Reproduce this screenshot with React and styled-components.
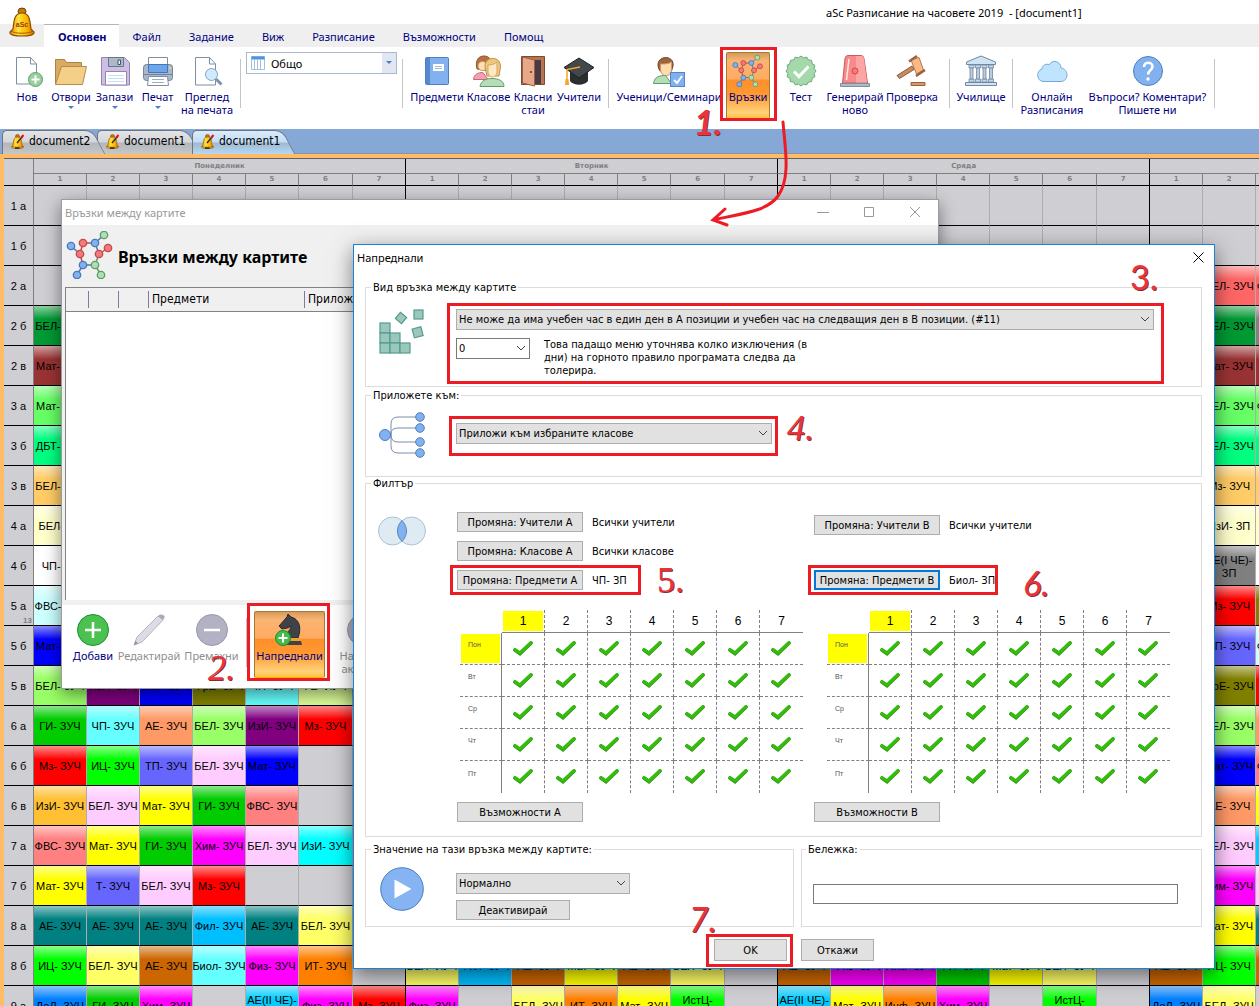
import React from "react";
import styled, { createGlobalStyle, css } from "styled-components";

const ui = `"Noto Sans", "Open Sans", sans-serif`;
const dialogFont = `Tahoma, "DejaVu Sans Condensed", Roboto, sans-serif`;
const arial = `"Liberation Sans", Arial, sans-serif`;
const navy = "#000080";
const red = "#ed1c24";

const GlobalStyle = createGlobalStyle`
  * { box-sizing: border-box; }
  body { margin: 0; overflow: hidden; background: #fff; font-family: ${ui}; font-size: 11px; line-height: 13px; color: #000; }
  button, select, input { font: inherit; color: inherit; margin: 0; padding: 0; border: 0; background: none; }
  svg { display: block; flex: none; }
  h1, h2, p { margin: 0; font-weight: normal; font-size: inherit; }
`;

const Desktop = styled.main`
  position: relative;
  height: 100vh;
  overflow: hidden;
  display: flex;
  flex-direction: column;
`;

/* ---------- title, menu, ribbon ---------- */

const TitleBar = styled.header`
  flex: none;
  height: 24px;
  padding: 6px 0 0 826px;
  white-space: pre;
`;

const AppLogo = styled.div`
  position: absolute;
  left: 7px;
  top: 7px;
`;

const MenuBar = styled.nav`
  flex: none;
  display: flex;
  height: 23px;
  padding-left: 44px;
  background: #efefef;
`;

const MenuTab = styled.button`
  height: 23px;
  padding: 2px 14px 0;
  color: ${navy};
  ${(p) =>
    p.$active &&
    css`
      background: #fff;
      border-top: 1px solid #b4b4b4;
      font-weight: bold;
      padding: 1px 12px 0 14px;
    `}
`;

const Ribbon = styled.section`
  flex: none;
  display: flex;
  align-items: flex-start;
  height: 82px;
  padding: 5px 0 0 5px;
`;

const RibbonButton = styled.button`
  position: relative;
  z-index: 0;
  flex: none;
  width: ${(p) => p.$w}px;
  height: 67px;
  padding-top: 3px;
  display: flex;
  flex-direction: column;
  align-items: center;
  gap: 3px;
  color: ${(p) => (p.$muted ? "#8f8f8f" : navy)};
  text-align: center;
  white-space: pre;
  ${(p) =>
    p.$hot &&
    css`
      &::before {
        content: "";
        position: absolute;
        z-index: -1;
        inset: 0 2px;
        border: 1px solid #a5792f;
        border-bottom-color: #ffb000;
        border-radius: 2px;
        background: linear-gradient(#d69a5c, #fbb472 12%, #ffab62 40%, #ff8f2a 42%, #ff9a33 65%, #ffd27a 92%, #ffc23c);
      }
    `}
`;

const Caret = styled.i`
  width: 0;
  border: 3px solid transparent;
  border-top-color: #4a7fc4;
  border-bottom: 0;
`;

const Divider = styled.span`
  flex: none;
  width: 1px;
  height: 49px;
  margin: 7px 5px 0;
  background: #c4c4c4;
`;

const ViewPicker = styled.div`
  position: relative;
  width: 151px;
  height: 22px;
  svg { position: absolute; left: 5px; top: 4px; }
  select {
    width: 100%;
    height: 22px;
    padding-left: 24px;
    appearance: none;
    border: 1px solid #a9b9d3;
    background: #fff;
  }
  i {
    position: absolute;
    right: 1px;
    top: 1px;
    width: 14px;
    height: 20px;
    background: #e2e6f2;
    pointer-events: none;
  }
  i::after {
    content: "";
    position: absolute;
    left: 4px;
    top: 8px;
    border: 3px solid transparent;
    border-top-color: #4a7fc4;
    border-bottom: 0;
  }
`;

/* ---------- document tabs ---------- */

const DocTabs = styled.nav`
  flex: none;
  display: flex;
  height: 24px;
  padding: 1px 0 0 2px;
  background: #86a8d6;
`;

const tabFace = (active) =>
  active
    ? "linear-gradient(#d9ebfb, #c3dcf5 48%, #9fb9cf 52%, #b5d8f5)"
    : "linear-gradient(#e2e3e6, #d4d6da 48%, #b3b6ba 52%, #c5c7ca)";

const DocTab = styled.button`
  position: relative;
  z-index: ${(p) => p.$z};
  width: 95px;
  height: 23px;
  padding: 0 0 0 8px;
  display: flex;
  align-items: center;
  gap: 4px;
  font: 12px/13px ${dialogFont};
  &::before,
  &::after {
    content: "";
    position: absolute;
    z-index: -1;
    top: 0;
    height: 23px;
    border: 1px solid #6f747c;
    background: ${(p) => tabFace(p.$active)};
  }
  &::before {
    left: 0;
    width: 82px;
    border-width: 1px 0 0 1px;
    border-radius: 5px 0 0 0;
  }
  &::after {
    left: 70px;
    width: 26px;
    border-width: 1px 1px 0 0;
    border-radius: 0 8px 0 0;
    transform: skewX(28deg);
  }
`;

/* ---------- timetable ---------- */

const Board = styled.section`
  flex: 1;
  min-height: 0;
  overflow: hidden;
  padding: 4px 0 0 4px;
  background: #ffbb66;
  border-top: 1px solid #8793b0;
`;

const Timetable = styled.table`
  table-layout: fixed;
  width: 1518px;
  border-collapse: separate;
  border-spacing: 0;
  border-top: 1px solid #5f6065;
  background: #cfced3;
  font-family: ${arial};
`;

const DayHead = styled.th`
  height: 15px;
  padding: 0;
  border-right: 1px solid #000;
  border-bottom: 1px solid #808080;
  color: #808080;
  font: bold 7px/13px "DejaVu Sans", sans-serif;
`;

const PeriodHead = styled.th`
  height: 12px;
  padding: 0;
  border-right: 1px solid ${(p) => (p.$last ? "#000" : "#808080")};
  border-bottom: 1px solid #000;
  color: #808080;
  font: bold 7px/11px "DejaVu Sans", sans-serif;
`;

const CornerHead = styled.th`
  padding: 0;
  border-right: 1px solid #808080;
  border-bottom: 1px solid #000;
`;

const ClassHead = styled.th`
  position: relative;
  height: 40px;
  padding: 2px 0 0;
  border-right: 1px solid #808080;
  border-bottom: 1px solid #000;
  font-size: 11px;
  font-weight: normal;
  small {
    position: absolute;
    right: 1px;
    bottom: 0;
    color: #808080;
    font: bold 8px/8px ${arial};
  }
`;

const Lesson = styled.td`
  height: 40px;
  padding: 2px 0 0;
  border-right: 1px solid ${(p) => (p.$last ? "#000" : "#adadb0")};
  border-bottom: 1px solid #000;
  background: ${(p) =>
    p.$fill
      ? `linear-gradient(rgba(255,255,255,.55), rgba(255,255,255,0) 34%), ${p.$fill}`
      : "transparent"};
  text-align: center;
  vertical-align: middle;
  font-size: 11px;
  line-height: 13px;
  div {
    display: flex;
    justify-content: center;
    overflow: hidden;
    white-space: pre;
  }
`;

/* ---------- windows ---------- */

const Window = styled.section`
  position: absolute;
  display: flex;
  flex-direction: column;
`;

const LinksWindow = styled(Window)`
  left: 61px;
  top: 199px;
  width: 878px;
  height: 490px;
  border: 1px solid #9c9c9c;
  background: #f0f0f0;
  box-shadow: 0 5px 16px rgba(0, 0, 0, 0.45);
`;

const LinksTitle = styled.header`
  display: flex;
  justify-content: space-between;
  align-items: center;
  height: 25px;
  padding: 0 17px 1px 3px;
  background: #fff;
  color: #999;
  div { display: flex; gap: 34px; }
`;

const LinksHeading = styled.div`
  display: flex;
  align-items: center;
  gap: 4px;
  height: 62px;
  padding: 0 0 3px 4px;
  h1 { font-size: 16px; line-height: 22px; font-weight: bold; padding-top: 5px; }
`;

const LinksList = styled.div`
  flex: 1;
  margin: 0 3px 5px;
  border: 1px solid #828282;
  border-right-color: #ccc;
  border-bottom: 0;
  background: #fff;
`;

const LinksTable = styled.table`
  width: 100%;
  table-layout: fixed;
  border-spacing: 0;
  background: #f0f0f0;
  border-bottom: 1px solid #828282;
  th {
    height: 23px;
    padding: 0 0 0 3px;
    font: 12px/13px ${dialogFont};
    text-align: left;
    background: linear-gradient(#7b7ba8, #7b7ba8) right 3px / 1px 17px no-repeat;
  }
`;

const LinksToolbar = styled.footer`
  display: flex;
  align-items: flex-start;
  height: 83px;
  padding: 6px 0 0 8px;
  background: #fff;
`;

const Advanced = styled(Window)`
  left: 353px;
  top: 244px;
  width: 862px;
  border: 1px solid #1883d7;
  background: #fff;
  box-shadow: 0 6px 20px rgba(0, 0, 0, 0.5);
  font-family: ${dialogFont};
`;

const AdvancedTitle = styled.header`
  display: flex;
  justify-content: space-between;
  align-items: center;
  height: 24px;
  padding: 0 10px 0 3px;
  font-family: ${ui};
`;

const WindowButton = styled.button`
  display: grid;
  place-items: center;
`;

const Form = styled.form`
  padding: 12px 12px 7px 11px;
`;

const Group = styled.fieldset`
  margin: 0 0 ${(p) => p.$after || 0}px;
  min-width: 0;
  padding: ${(p) => p.$pad};
  border: 1px solid #dcdcdc;
  legend {
    height: 13px;
    margin-left: -7px;
    padding: 0 2px;
  }
`;

const GroupRow = styled.div`
  display: flex;
  align-items: flex-start;
  gap: 30px;
`;

const IconSlot = styled.div`
  flex: none;
  width: 48px;
  display: flex;
  justify-content: center;
  padding-top: ${(p) => p.$top || 0}px;
`;

const Stack = styled.div`
  flex: ${(p) => p.$flex || "none"};
  display: flex;
  flex-direction: column;
  align-items: flex-start;
  gap: ${(p) => p.$gap || 0}px;
  padding-top: ${(p) => p.$top || 0}px;
`;

const SelectBox = styled.div`
  position: relative;
  width: ${(p) => p.$w};
  select {
    width: 100%;
    height: 21px;
    padding-left: 2px;
    appearance: none;
    border: 1px solid ${(p) => (p.$plain ? "#7a7a7a" : "#adadad")};
    border-radius: 0;
    background: ${(p) => (p.$plain ? "#fff" : "#e1e1e1")};
  }
  svg {
    position: absolute;
    right: 4px;
    top: 7px;
    pointer-events: none;
  }
`;

const PushButton = styled.button`
  flex: none;
  width: ${(p) => p.$w}px;
  height: ${(p) => p.$h || 20}px;
  border: ${(p) => (p.$focused ? "2px solid #0078d7" : "1px solid #adadad")};
  background: #e1e1e1;
  white-space: nowrap;
`;

const Marked = styled.div`
  position: relative;
  width: ${(p) => p.$w || "auto"};
  &::after {
    content: "";
    position: absolute;
    inset: ${(p) => p.$out};
    border: 3px solid ${red};
    pointer-events: none;
  }
`;

const ExceptionRow = styled.div`
  display: flex;
  gap: 14px;
  p { width: 275px; }
`;

const FilterSides = styled.div`
  display: flex;
  gap: 10px;
  padding-left: 1px;
`;

const Side = styled.div`
  width: ${(p) => p.$w}px;
`;

const Pickers = styled.div`
  display: flex;
  flex-direction: column;
  justify-content: space-between;
  height: 78px;
  margin-bottom: 20px;
  padding-top: ${(p) => p.$top || 0}px;
`;

const Picker = styled.div`
  display: flex;
  align-items: center;
  gap: 9px;
  white-space: nowrap;
`;

const SlotTable = styled.table`
  table-layout: fixed;
  width: 343px;
  margin: 0 0 9px ${(p) => p.$indent}px;
  border-spacing: 0;
  font-family: ${arial};
`;

const SlotHead = styled.th`
  height: 23px;
  padding: 1px 1px 1px;
  border-bottom: 1px solid #808080;
  border-right: ${(p) => (p.$edge ? "0" : "1px dashed #808080")};
  font-size: 12px;
  font-weight: normal;
  span {
    display: block;
    height: 20px;
    line-height: 21px;
    background: ${(p) => (p.$on ? "#ff0" : "none")};
  }
`;

const SlotDay = styled.th`
  height: 32px;
  padding: 1px;
  border-right: 1px solid #808080;
  border-bottom: ${(p) => (p.$edge ? "0" : "1px dashed #808080")};
  color: #555;
  font-size: 7px;
  font-weight: normal;
  text-align: left;
  span {
    display: block;
    height: 29px;
    padding-left: 7px;
    line-height: 22px;
    background: ${(p) => (p.$on ? "#ff0" : "none")};
  }
`;

const Slot = styled.td`
  height: 32px;
  padding: 0 1px 2px 0;
  border-bottom: ${(p) => (p.$bottom ? "0" : "1px dashed #808080")};
  border-right: ${(p) => (p.$edge ? "0" : "1px dashed #808080")};
  svg { margin: 0 auto; }
`;

const BottomGrid = styled.div`
  display: grid;
  grid-template-columns: 429px 1fr;
  column-gap: 7px;
  margin-top: 6px;
`;

const NoteInput = styled.input`
  width: 100%;
  height: 20px;
  border: 1px solid #7a7a7a;
  background: #fff;
`;

const FootCell = styled.div`
  display: flex;
  justify-content: ${(p) => p.$side};
  padding: 12px 7px 0 0;
`;

/* ---------- marker notes over the windows ---------- */

const Step = styled.strong`
  position: absolute;
  left: ${(p) => p.$x}px;
  top: ${(p) => p.$y}px;
  color: #e8353b;
  font: ${(p) => (p.$italic ? "italic" : "normal")} ${(p) => (p.$bold ? "bold" : "normal")}
    ${(p) => (p.$sans ? `34px/36px Lato, sans-serif` : `36px/36px "Liberation Serif", serif`)};
  text-shadow: 1px 1px 0 #8e2a2e;
  pointer-events: none;
`;

const Arrow = styled.svg`
  position: absolute;
  left: 700px;
  top: 118px;
  pointer-events: none;
`;

/* ---------- drawings ---------- */

const Bell = ({ size, logo }) => (
  <svg width={size} height={size} viewBox="0 0 28 30">
    <defs>
      <linearGradient id="bellFill" x1="0" x2="1">
        <stop offset="0" stopColor="#e58a00" />
        <stop offset=".35" stopColor="#ffe23a" />
        <stop offset=".7" stopColor="#ffb400" />
        <stop offset="1" stopColor="#c96a00" />
      </linearGradient>
    </defs>
    <ellipse cx="14" cy="4.500" rx="4" ry="3.500" fill="#c57a10" stroke="#6b3d08" />
    <path d="M5 22C6 17 5 6 14 6s8 11 9 16l3 3c1 3-5 4-12 4S1 28 2 25z" fill="url(#bellFill)" stroke="#8a4a00" strokeWidth="1.200" />
    <path d="M3 24c4 3 18 3 22 0" fill="none" stroke="#a85c00" />
    {logo ? (
      <text x="14" y="20" textAnchor="middle" fontSize="7" fontWeight="bold" fill="#9a3a00" fontFamily="Liberation Sans">aSc</text>
    ) : (
      <>
        <path d="M13 18 24 5" stroke="#333" strokeWidth="3" />
        <path d="M21 8 26 2" stroke="#e11" strokeWidth="4" />
        <path d="M9 28h9" stroke="#222" strokeWidth="3" />
      </>
    )}
  </svg>
);

const Ic = ({ children, s = 32, v = 32 }) => (
  <svg width={s} height={s} viewBox={`0 0 ${v} ${v}`} fill="none" strokeWidth="1">
    {children}
  </svg>
);

const NewIcon = () => (
  <Ic>
    <path d="M5.500 2.500h14l6 6.500v20h-20zM19.500 2.500v6.500h6" fill="#fff" stroke="#7d8fa3" />
    <circle cx="24.500" cy="24.500" r="7" fill="#97d09c" stroke="#5f9f68" />
    <path d="M24.500 20.500v8M20.500 24.500h8" stroke="#fff" strokeWidth="2" />
  </Ic>
);
const OpenIcon = () => (
  <Ic>
    <path d="M.5 29.500v-25h9l2 3h15v4" fill="#d9ab62" stroke="#a98445" />
    <path d="M.5 29.500 6.500 11.500h25l-4 18z" fill="#f3cf88" stroke="#b38d4e" />
  </Ic>
);
const SaveIcon = () => (
  <Ic>
    <path d="M2.500 2.500h23l5 5v22.500h-28z" fill="#cdbfe3" stroke="#9484b3" />
    <path d="M9.500 2.500h15v9h-15z" fill="#aeb8c6" stroke="#65758a" />
    <path d="M19 5h2.500v4.500H19z" fill="#eef" stroke="#42526b" />
    <path d="M6.500 16.500h21v13.500h-21z" fill="#fff" stroke="#9484b3" />
    <path d="M9 20.500h16M9 23.500h16M9 26.500h16" stroke="#bfe2f7" />
  </Ic>
);
const PrintIcon = () => (
  <Ic>
    <path d="M6.500 2.500h19v8h-19z" fill="#fff" stroke="#7d8fa3" />
    <rect x="1.500" y="9.500" width="29" height="16" rx="3" fill="#aab7ca" stroke="#72839b" />
    <path d="M6.500 9.500h19v8h-19z" fill="#6fa5ea" stroke="#4377bb" />
    <path d="M2 19.500h28" stroke="#72839b" />
    <path d="M6.500 21.500h19l1 9h-21z" fill="#fff" stroke="#7d8fa3" />
    <path d="M10 24.500h12M10 27.500h12" stroke="#9fb0c2" />
    <circle cx="28" cy="13" r="1" fill="#ffdf7a" />
  </Ic>
);
const PreviewIcon = () => (
  <Ic>
    <path d="M4.500 2.500h14l6 6.500v21h-20zM18.500 2.500v6.500h6" fill="#fff" stroke="#7d8fa3" />
    <circle cx="20.500" cy="19.500" r="6" fill="#cfeafd" stroke="#7fa3c6" />
    <path d="m25 24 5.500 5.500" stroke="#7d93aa" strokeWidth="3" />
  </Ic>
);
const BookIcon = () => (
  <Ic>
    <rect x="4.500" y="2.500" width="23" height="27" rx="1" fill="#83b0ee" stroke="#4d7fc0" />
    <path d="M5 3h4v26H5z" fill="#5489d0" />
    <path d="M12 9h11v7H12z" fill="#fff" />
    <path d="M14 11.500h7M14 13.500h7" stroke="#9dbde8" />
  </Ic>
);
const ClassesIcon = () => (
  <Ic>
    <path d="M4 14C2 6 5 1 11 1s9 5 6 15z" fill="#b86f45" stroke="#8d5230" />
    <circle cx="9.500" cy="11" r="4.500" fill="#ffe0b5" stroke="#c99762" />
    <path d="M.5 24.500c.5-5 4-7 9.500-7l5 7z" fill="#f5a0b0" stroke="#c8687c" />
    <path d="M12 12c-1-11 16-12 15.500 0L26 21H14z" fill="#efc77a" stroke="#c0924a" />
    <path d="M15 10c4 0 7-1 9-3v9c0 8-9 8-9 0z" fill="#ffe9c4" stroke="#d1a56a" />
    <path d="M7 31.500c1-6 6-8 12-8s12 2 12 8z" fill="#b3deb8" stroke="#639a6c" />
  </Ic>
);
const DoorIcon = () => (
  <Ic>
    <path d="M4.500 1.500h23v28h-23z" fill="#b87450" stroke="#7d4a30" />
    <path d="M8 5h16v24H8z" fill="#4a3a42" />
    <path d="m5.500 2 12 3v26l-12-3z" fill="#e6a888" stroke="#9a5f42" />
    <circle cx="14" cy="17" r="1" fill="#5a3321" />
  </Ic>
);
const CapIcon = () => (
  <Ic>
    <path d="M7 16v10c4 5 14 5 18 0V16z" fill="#2b2e31" />
    <path d="M16 3 31 12.500 16 23 1 12.500z" fill="#43484c" stroke="#1e2022" />
    <path d="M17 12 4 14.500v10" stroke="#f5a72c" strokeWidth="1.500" />
    <path d="M2.500 24h3l.5 6h-4z" fill="#f5a72c" />
  </Ic>
);
const StudentsIcon = () => (
  <Ic>
    <path d="M5.500 13C1.500 0 22-1 20 11l-1.500 5H7z" fill="#9b6540" stroke="#704529" />
    <path d="M7.500 9c4 0 8 0 11-2v7c0 9-11 9-11 0z" fill="#ffdcae" stroke="#c9985e" />
    <path d="M.5 28.500c1-7 6-8 12-8l6 8z" fill="#b3deb8" stroke="#639a6c" />
    <rect x="17.500" y="17.500" width="14" height="14" fill="#7fb0f0" stroke="#5685c6" />
    <path d="m21 25 3 3 5-7" stroke="#fff" strokeWidth="2" />
  </Ic>
);
const atoms = [
  [5, 15, "b"], [17, 12, "r"], [29, 12, "b"], [38, 4, "g"], [14, 23, "r"], [33, 23, "r"],
  [42, 17, "r"], [17, 34, "b"], [29, 34, "g"], [11, 44, "b"], [35, 44, "g"],
];
const bonds = [[0, 4], [1, 2], [2, 3], [1, 4], [2, 5], [5, 6], [4, 7], [7, 8], [8, 5], [7, 9], [8, 10]];
const atomFill = { b: "#82b1f0", r: "#f4797b", g: "#b0dfb6" };
const atomEdge = { b: "#4a78b8", r: "#c2484c", g: "#5d9b69" };
const Molecule = ({ s }) => (
  <Ic s={s} v={48}>
    {bonds.map(([a, b], i) => (
      <line key={i} x1={atoms[a][0]} y1={atoms[a][1]} x2={atoms[b][0]} y2={atoms[b][1]} stroke={atomEdge[atoms[a][2]]} strokeWidth="1.500" />
    ))}
    {atoms.map(([x, y, c], i) => (
      <circle key={i} cx={x} cy={y} r="3.700" fill={atomFill[c]} stroke={atomEdge[c]} strokeWidth="1.300" />
    ))}
  </Ic>
);
const sealPoints = Array.from({ length: 32 }, (_, i) => {
  const r = i % 2 ? 13.4 : 15;
  const a = (i * Math.PI) / 16;
  return `${(16 + r * Math.cos(a)).toFixed(1)},${(16 + r * Math.sin(a)).toFixed(1)}`;
}).join(" ");
const SealIcon = () => (
  <Ic>
    <polygon points={sealPoints} fill="#a5d9ac" stroke="#6aa873" />
    <path d="m9 16.500 5 5 9.500-10" stroke="#fff" strokeWidth="3" />
  </Ic>
);
const AlarmIcon = () => (
  <Ic>
    <path d="M6 3.500Q6.500.5 9 .5h13q2.500 0 3 3L28.500 28h-25z" fill="#f98a8a" stroke="#cc5a5c" />
    <path d="M17 1h5q2.500 0 3 3L28 27.500H17z" fill="#fba5a4" />
    <path d="M10 4 7.500 25" stroke="#fff" strokeWidth="1.500" opacity=".8" />
    <circle cx="16" cy="16" r="3" stroke="#cc4a4c" fill="#f77" />
    <path d="M1.500 28.500h29v3h-29z" fill="#a9bac8" stroke="#7c90a2" />
  </Ic>
);
const GavelIcon = () => (
  <Ic>
    <path d="M1 20.500 16 11l2 3.500L3.500 23.500z" fill="#c98a5f" stroke="#8f5b39" />
    <path d="m15 5 8-2.500L27.500 15l-7 4z" fill="#fbb985" stroke="#b0754b" />
    <path d="m13 6.500 8-5.500M20 21l9-6" stroke="#9c6239" strokeWidth="2.500" />
    <path d="M15 27.500h14v3H15z" fill="#d9996e" stroke="#9c6239" />
  </Ic>
);
const SchoolIcon = () => (
  <Ic>
    <path d="M1.500 9.500V7L16 1l14.500 6v2.500z" fill="#cfe4f3" stroke="#7188a0" />
    {[4, 10.5, 17, 23.5].map((x) => (
      <g key={x}>
        <path d={`M${x} 10h5v3h-5zM${x} 24h5v3h-5z`} fill="#c6d9ea" stroke="#7188a0" strokeWidth=".8" />
        <path d={`M${x + 1} 13h3v11h-3z`} fill="#b7cbe3" stroke="#7188a0" strokeWidth=".8" />
      </g>
    ))}
    <path d="M.5 27.500h31v3H.5z" fill="#cfe4f3" stroke="#7188a0" />
  </Ic>
);
const CloudIcon = () => (
  <Ic>
    <path d="M7 26.500a6.500 6.500 0 0 1-1-12.500c0-4 5-6 7-4 3-6 12-4 12 3 8 1 8 13 0 13.500z" fill="#bfe5fe" stroke="#77a9d8" />
  </Ic>
);
const HelpIcon = () => (
  <Ic>
    <circle cx="16" cy="16" r="14.500" fill="#82b1f0" stroke="#4d7fc0" />
    <path d="M12 12c0-6 8.500-5.500 8.500-.5 0 3.500-4 3.500-4.500 8" stroke="#fff" strokeWidth="2.500" />
    <circle cx="16" cy="24" r="1.700" fill="#fff" />
  </Ic>
);
const SheetIcon = () => (
  <svg width="14" height="14" viewBox="0 0 14 14" fill="#fff" stroke="#a3c0df">
    <path d="M.5.5h13v13H.5z" />
    <path d="M.5 2h13" stroke="#4f93dc" strokeWidth="3" />
    <path d="M3.500 3v10M6.500 3v10M9.500 3v10" />
  </svg>
);
const DiscIcon = ({ minus, ok }) => (
  <Ic>
    <circle cx="16" cy="16" r="15.500" fill={ok ? "#4bc24f" : "#b2b2c4"} stroke={ok ? "#1e8f32" : "#9797ae"} />
    <path d={minus ? "M8 16h16" : "M8 16h16M16 8v16"} stroke="#fff" strokeWidth="2.500" />
  </Ic>
);
const PenIcon = () => (
  <Ic>
    <path d="m1 31 3-8L25 2l5 4L9 28z" fill="#dcdce4" stroke="#b5b5c2" />
    <path d="m25 2 2-1.500q3-.5 4.500 1.500v2L30 6z" fill="#a9a9b8" />
    <path d="m1 31 1.500-4L5 29.500z" fill="#8f8f9f" />
  </Ic>
);
const KnightIcon = () => (
  <Ic>
    <path d="M5 12 13 3l1-3 3 3c8 2 11 10 7 21H12c-1-6 5-7 5-12-3 3-6 2-9 3z" fill="#3f4347" stroke="#26292c" />
    <path d="M16 24h10v3H16z" fill="#f3a12c" />
    <path d="M14 27h13l1 4H13z" fill="#3f4347" />
    <circle cx="9" cy="24" r="7.500" fill="#45bb4c" stroke="#1e8f32" />
    <path d="M9 19.500v9M4.500 24h9" stroke="#fff" strokeWidth="2" />
  </Ic>
);
const BlocksIcon = () => (
  <svg width="46" height="46" viewBox="0 0 46 46" fill="#9ac8bd" stroke="#559b8e" strokeWidth="1.200">
    {[[1, 14], [1, 24], [11, 24], [1, 34], [11, 34], [21, 34]].map(([x, y]) => (
      <rect key={`${x}-${y}`} x={x} y={y} width="10" height="10" />
    ))}
    <rect x="35" y="1" width="9" height="9" />
    <rect x="18" y="5" width="8" height="8" transform="rotate(40 22 9)" />
    <rect x="34" y="19" width="9" height="9" transform="rotate(-15 38 23)" />
  </svg>
);
const TreeIcon = () => (
  <svg width="48" height="48" viewBox="0 0 48 48" fill="none" stroke="#7d8fa3">
    <path d="M8 24h5M42 6H20q-7 0-7 7v22q0 7 7 7h22M13 24v-1q0-6 7-6h22M13 24q0 7 7 7h22" />
    <circle cx="7" cy="24" r="5.500" fill="#82b1f0" stroke="#4d7fc0" />
    {[6, 17, 31, 42].map((y) => (
      <circle key={y} cx="42" cy={y} r="4.300" fill="#82b1f0" stroke="#4d7fc0" />
    ))}
  </svg>
);
const VennIcon = () => (
  <svg width="48" height="32" viewBox="0 0 48 32" stroke="#a9c1d6">
    <circle cx="14.500" cy="16" r="14" fill="#dfebf2" />
    <circle cx="33.500" cy="16" r="14" fill="#dfebf2" />
    <path d="M24 5.700a14 14 0 0 1 0 20.600a14 14 0 0 1 0-20.600z" fill="#82b1f0" stroke="#5d89bd" />
  </svg>
);
const PlayIcon = () => (
  <svg width="44" height="44" viewBox="0 0 44 44">
    <circle cx="22" cy="22" r="21.300" fill="#86b3f1" stroke="#4d7fc0" />
    <path d="M14.500 12.500 31.500 22l-17 9.500z" fill="#fff" />
  </svg>
);
const Tick = () => (
  <svg width="22" height="16" viewBox="0 0 22 16" fill="none" strokeLinecap="round">
    <path d="M3 10 8 13.500 19 3" stroke="#2a8f12" strokeWidth="3.800" />
    <path d="M3 9.700 8 13 19 2.700" stroke="#35bd0c" strokeWidth="3.100" />
  </svg>
);
const Chevron = () => (
  <svg width="10" height="7" viewBox="0 0 10 7" fill="none" stroke="#444">
    <path d="m1 1 4 4 4-4" />
  </svg>
);

/* ---------- data ---------- */

const C = {
  green: "#009933", wine: "#993333", lime: "#66ff66", mint: "#00ff80", sand: "#ffcc66", cream: "#ffffcc",
  white: "#ffffff", ice: "#ccffff", blue: "#0000ff", apple: "#99ff66", purple: "#800080", olive: "#808000",
  aqua: "#66ffff", pear: "#ddff99", leaf: "#00cc00", peach: "#ff9966", red: "#ff0000", neon: "#00ff00",
  iris: "#6666ff", pink: "#ffccff", amber: "#ffc033", yellow: "#ffff00", rose: "#ff8080", magenta: "#ff00ff",
  cyan: "#00ffff", teal: "#008080", sky: "#00bfff", lemon: "#ffff66", brown: "#cc6600", orange: "#ff8000",
  azure: "#0080ff", water: "#00ccff", coral: "#ff6666", gray: "#808080",
};

const rows = [
  ["1 а", "", "", "", ""],
  ["1 б", "", "", "", ""],
  ["2 а", "", "", "", "|coral БЕЛ- ЗУЧ|coral ФВС- ЗУЧ"],
  ["2 б", "green БЕЛ- ЗУЧ", "", "", "|green БЕЛ- ЗУЧ|gray "],
  ["2 в", "wine Мат- ЗУЧ", "", "", "|wine Мат- ЗУЧ|wine "],
  ["3 а", "lime Мат- ЗУЧ", "", "", "|lime БЕЛ- ЗУЧ|lime ФВС- ЗУЧ"],
  ["3 б", "mint ДБТ- ЗУЧ", "", "", "|mint БЕЛ- ЗУЧ|mint "],
  ["3 в", "sand БЕЛ- ЗУЧ", "", "", "|sand Мз- ЗУЧ|sand "],
  ["4 а", "cream БЕЛ- ЗП", "", "", "|cream ИзИ- ЗП|cream "],
  ["4 б", "white ЧП- ЗП", "", "", "|gray АЕ(I ЧЕ)-\nЗП|white "],
  ["5 а", "ice ФВС- ЗУЧ", "", "", "|red Мз- ЗУЧ|olive "],
  ["5 б", "blue Мат- ЗУЧ", "", "", "|iris ТП- ЗУЧ|ice ФВС- ЗУЧ"],
  ["5 в", "apple БЕЛ- ЗУЧ|purple ИзИ- ЗУЧ|blue Мат- ЗУЧ|olive ФрЕ- ЗУЧ|aqua ЧП- ЗУЧ|pear ГЕ- ИУЧ", "", "", "|olive ФрЕ- ЗУЧ|red "],
  ["6 а", "leaf ГИ- ЗУЧ|aqua ЧП- ЗУЧ|peach АЕ- ЗУЧ|apple БЕЛ- ЗУЧ|purple ИзИ- ЗУЧ|red Мз- ЗУЧ", "", "", "|apple БЕЛ- ЗУЧ|peach "],
  ["6 б", "red Мз- ЗУЧ|neon ИЦ- ЗУЧ|iris ТП- ЗУЧ|pink БЕЛ- ЗУЧ|blue Мат- ЗУЧ", "", "", "|blue Мат- ЗУЧ|rose ФВС- ЗУЧ"],
  ["6 в", "amber ИзИ- ЗУЧ|pink БЕЛ- ЗУЧ|yellow Мат- ЗУЧ|leaf ГИ- ЗУЧ|rose ФВС- ЗУЧ", "", "", "|peach АЕ- ЗУЧ|yellow "],
  ["7 а", "rose ФВС- ЗУЧ|yellow Мат- ЗУЧ|leaf ГИ- ЗУЧ|magenta Хим- ЗУЧ|pink БЕЛ- ЗУЧ|cyan ИзИ- ЗУЧ", "", "", "|pink БЕЛ- ЗУЧ|water "],
  ["7 б", "yellow Мат- ЗУЧ|iris Т- ЗУЧ|pink БЕЛ- ЗУЧ|red Мз- ЗУЧ", "", "", "|magenta Хим- ЗУЧ|pink "],
  ["8 а", "teal АЕ- ЗУЧ|teal АЕ- ЗУЧ|teal АЕ- ЗУЧ|sky Фил- ЗУЧ|teal АЕ- ЗУЧ|lemon БЕЛ- ЗУЧ", "", "", "|yellow Мат- ЗУЧ|teal "],
  ["8 б", "neon ИЦ- ЗУЧ|lemon БЕЛ- ЗУЧ|brown АЕ- ЗУЧ|aqua Биол- ЗУЧ|magenta Физ- ЗУЧ|orange ИТ- ЗУЧ",
    "lemon БЕЛ- ИУЧ|sky Фил- ЗУЧ|brown АЕ- ЗУЧ|yellow Мат- ЗУЧ|brown АЕ- ЗУЧ|lemon БЕЛ- ЗУЧ",
    "brown АЕ- ЗУЧ|magenta Физ- ЗУЧ|magenta Хим- ЗУЧ|leaf ГИ- ЗУЧ|yellow Мат- ЗУЧ|lemon БЕЛ- ЗУЧ",
    "brown АЕ- ЗУЧ|neon ИЦ- ЗУЧ|brown "],
  ["9 а", "azure ДеЛ- ЗУЧ|leaf ГИ- ЗУЧ|magenta Хим- ЗУЧ||water АЕ(II ЧЕ)-\nЗУЧ|magenta Физ- ЗУЧ|red Мз- ЗУЧ",
    "magenta Физ- ЗУЧ||lemon БЕЛ- ЗУЧ|orange ИТ- ЗУЧ|yellow Мат- ЗУЧ|neon ИстЦ-\nЗУЧ",
    "water АЕ(II ЧЕ)-\nЗУЧ|yellow Мат- ЗУЧ|orange Инф- ЗУЧ|magenta Хим- ЗУЧ||neon ИстЦ-\nЗУЧ",
    "azure ДеЛ- ЗУЧ|lemon БЕЛ- ЗУЧ"],
];

const periods = [1, 2, 3, 4, 5, 6, 7];
const weekdays = ["Понеделник", "Вторник", "Сряда", "Четвъртък"];

const parseDay = (day) => {
  const cells = day.split("|");
  return periods.map((_, i) => {
    const cell = cells[i] || "";
    const cut = cell.indexOf(" ");
    return cut < 0 ? {} : { fill: C[cell.slice(0, cut)], text: cell.slice(cut + 1) };
  });
};

const Col = styled.col`
  width: ${(p) => p.$w}px;
`;

function Schedule() {
  return (
    <Timetable>
      <colgroup>
        <Col $w={30} />
        {weekdays.map((d) => periods.map((p) => <Col key={d + p} $w={p === 6 ? 54 : 53} />))}
      </colgroup>
      <thead>
        <tr>
          <CornerHead rowSpan={2} />
          {weekdays.map((d) => <DayHead key={d} colSpan={7}>{d}</DayHead>)}
        </tr>
        <tr>
          {weekdays.map((d) => periods.map((p) => <PeriodHead key={d + p} $last={p === 7}>{p}</PeriodHead>))}
        </tr>
      </thead>
      <tbody>
        {rows.map(([name, ...days]) => (
          <tr key={name}>
            <ClassHead scope="row">{name}{name === "5 а" && <small>13</small>}</ClassHead>
            {days.map((day, d) =>
              parseDay(day).map((c, i) => (
                <Lesson key={`${d}-${i}`} $fill={c.fill} $last={i === 6}>
                  {c.text && <div>{c.text}</div>}
                </Lesson>
              ))
            )}
          </tr>
        ))}
      </tbody>
    </Timetable>
  );
}

const Tool = ({ icon, w, label, caret, ...rest }) => (
  <RibbonButton type="button" $w={w} {...rest}>
    {icon}
    <span>{label}</span>
    {caret && <Caret />}
  </RibbonButton>
);

const Combo = ({ w, plain, label, value }) => (
  <SelectBox $w={w} $plain={plain}>
    <select aria-label={label} defaultValue={value}>
      <option>{value}</option>
    </select>
    <Chevron />
  </SelectBox>
);

const slotDays = ["Пон", "Вт", "Ср", "Чт", "Пт"];

const Slots = ({ indent }) => (
  <SlotTable $indent={indent}>
    <colgroup>
      <Col $w={42} />
      {periods.map((p) => <Col key={p} $w={43} />)}
    </colgroup>
    <thead>
      <tr>
        <td />
        {periods.map((p) => <SlotHead key={p} $on={p === 1} $edge={p === 7}><span>{p}</span></SlotHead>)}
      </tr>
    </thead>
    <tbody>
      {slotDays.map((d, r) => (
        <tr key={d}>
          <SlotDay scope="row" $on={r === 0} $edge={r === 4}><span>{d}</span></SlotDay>
          {periods.map((p) => <Slot key={p} $edge={p === 7} $bottom={r === 4}><Tick /></Slot>)}
        </tr>
      ))}
    </tbody>
  </SlotTable>
);

const PickerRow = ({ label, value, focused }) => (
  <Picker>
    <PushButton type="button" $w={126} $focused={focused}>{label}</PushButton>
    <span>{value}</span>
  </Picker>
);

export default function App() {
  return (
    <>
      <GlobalStyle />
      <Desktop>
        <TitleBar>{"aSc Разписание на часовете 2019  - [document1]"}</TitleBar>
        <MenuBar>
          {["Основен", "Файл", "Задание", "Виж", "Разписание", "Възможности", "Помощ"].map((m, i) => (
            <MenuTab key={m} type="button" $active={i === 0}>{m}</MenuTab>
          ))}
        </MenuBar>
        <AppLogo><Bell size={30} logo /></AppLogo>
        <Ribbon>
          <Tool icon={<NewIcon />} w={44} label="Нов" />
          <Tool icon={<OpenIcon />} w={44} label="Отвори" caret />
          <Tool icon={<SaveIcon />} w={43} label="Запази" caret />
          <Tool icon={<PrintIcon />} w={43} label="Печат" caret />
          <Tool icon={<PreviewIcon />} w={56} label={"Преглед\nна печата"} />
          <Divider />
          <ViewPicker>
            <select aria-label="Изглед" defaultValue="Общо"><option>Общо</option></select>
            <SheetIcon />
            <i />
          </ViewPicker>
          <Divider />
          <Tool icon={<BookIcon />} w={58} label="Предмети" />
          <Tool icon={<ClassesIcon />} w={45} label="Класове" />
          <Tool icon={<DoorIcon />} w={44} label={"Класни\nстаи"} />
          <Tool icon={<CapIcon />} w={48} label="Учители" />
          <Divider />
          <Tool icon={<StudentsIcon />} w={110} label="Ученици/Семинари" />
          <Marked $out="-5px -5px -2px -4px">
            <Tool icon={<Molecule s={32} />} w={48} label="Връзки" $hot />
          </Marked>
          <Tool icon={<SealIcon />} w={58} label="Тест" />
          <Tool icon={<AlarmIcon />} w={50} label={"Генерирай\nново"} />
          <Tool icon={<GavelIcon />} w={64} label="Проверка" />
          <Divider />
          <Tool icon={<SchoolIcon />} w={52} label="Училище" />
          <Divider />
          <Tool icon={<CloudIcon />} w={68} label={"Онлайн\nРазписания"} />
          <Tool icon={<HelpIcon />} w={123} label={"Въпроси? Коментари?\nПишете ни"} />
          <Divider />
        </Ribbon>
        <DocTabs>
          <DocTab type="button" $z={2}><Bell size={15} />document2</DocTab>
          <DocTab type="button" $z={1}><Bell size={15} />document1</DocTab>
          <DocTab type="button" $z={3} $active><Bell size={15} />document1</DocTab>
        </DocTabs>
        <Board><Schedule /></Board>

        <LinksWindow aria-label="Връзки между картите">
          <LinksTitle>
            <h2>Връзки между картите</h2>
            <div>
              <WindowButton aria-label="Минимизирай"><svg width="12" height="12" stroke="#999"><path d="M0 6.500h12" /></svg></WindowButton>
              <WindowButton aria-label="Увеличи"><svg width="12" height="12" fill="none" stroke="#999"><path d="M1.500 1.500h9v9h-9z" /></svg></WindowButton>
              <WindowButton aria-label="Затвори"><svg width="12" height="12" stroke="#999"><path d="m1 1 10 10M11 1 1 11" /></svg></WindowButton>
            </div>
          </LinksTitle>
          <LinksHeading>
            <Molecule s={48} />
            <h1>Връзки между картите</h1>
          </LinksHeading>
          <LinksList>
            <LinksTable>
              <colgroup>
                <Col $w={23} /><Col $w={30} /><Col $w={30} /><Col $w={156} /><col />
              </colgroup>
              <thead>
                <tr><th /><th /><th /><th>Предмети</th><th>Приложено към</th></tr>
              </thead>
            </LinksTable>
          </LinksList>
          <LinksToolbar>
            <Tool icon={<DiscIcon ok />} w={46} label="Добави" />
            <Tool icon={<PenIcon />} w={66} label="Редактирай" $muted />
            <Tool icon={<DiscIcon minus />} w={59} label="Премахни" $muted />
            <Divider />
            <Marked $out="-8px -3px -3px -5px">
              <Tool icon={<KnightIcon />} w={75} label="Напреднали" $hot />
            </Marked>
            <Tool icon={<DiscIcon minus />} w={72} label={"Направи\nактивна"} $muted />
          </LinksToolbar>
        </LinksWindow>

        <Advanced aria-label="Напреднали">
          <AdvancedTitle>
            <h2>Напреднали</h2>
            <WindowButton aria-label="Затвори"><svg width="11" height="11" stroke="#000"><path d="m.5.5 10 10M10.500.5l-10 10" /></svg></WindowButton>
          </AdvancedTitle>
          <Form>
            <Group $pad="15px 47px 9px 12px" $after={2}>
              <legend>Вид връзка между картите</legend>
              <GroupRow>
                <IconSlot><BlocksIcon /></IconSlot>
                <Stack $flex="1">
                  <Marked $w="100%" $out="-6px -10px -7px -9px">
                    <Stack $gap={8}>
                      <Combo w="100%" label="Вид връзка" value="Не може да има учебен час в един ден в A позиции и учебен час на следващия ден в B позиции. (#11)" />
                      <ExceptionRow>
                        <Combo w="74px" plain label="Изключения" value="0" />
                        <p>Това падащо меню уточнява колко изключения (в дни) на горното правило програмата следва да толерира.</p>
                      </ExceptionRow>
                    </Stack>
                  </Marked>
                </Stack>
              </GroupRow>
            </Group>
            <Group $pad="9px 12px 17px 12px">
              <legend>Приложете към:</legend>
              <GroupRow>
                <IconSlot><TreeIcon /></IconSlot>
                <Stack $top={12}>
                  <Marked $w="316px" $out="-7px -6px -12px -7px">
                    <Combo w="100%" label="Приложете към" value="Приложи към избраните класове" />
                  </Marked>
                </Stack>
              </GroupRow>
            </Group>
            <Group $pad="22px 12px 14px 12px">
              <legend>Филтър</legend>
              <GroupRow>
                <IconSlot $top={3}><VennIcon /></IconSlot>
                <FilterSides>
                  <Side $w={347}>
                    <Pickers>
                      <PickerRow label="Промяна: Учители A" value="Всички учители" />
                      <PickerRow label="Промяна: Класове A" value="Всички класове" />
                      <Marked $w="178px" $out="-5px -6px -5px -7px">
                        <PickerRow label="Промяна: Предмети A" value="ЧП- ЗП" />
                      </Marked>
                    </Pickers>
                    <Slots indent={3} />
                    <PushButton type="button" $w={126}>Възможности A</PushButton>
                  </Side>
                  <Side $w={360}>
                    <Pickers $top={3}>
                      <PickerRow label="Промяна: Учители B" value="Всички учители" />
                      <Marked $w="178px" $out="-5px -6px -5px -6px">
                        <PickerRow label="Промяна: Предмети B" value="Биол- ЗП" focused />
                      </Marked>
                    </Pickers>
                    <Slots indent={13} />
                    <PushButton type="button" $w={126}>Възможности B</PushButton>
                  </Side>
                </FilterSides>
              </GroupRow>
            </Group>
            <BottomGrid>
              <Group $pad="11px 12px 6px 12px">
                <legend>Значение на тази връзка между картите:</legend>
                <GroupRow>
                  <IconSlot><PlayIcon /></IconSlot>
                  <Stack $gap={6} $top={6}>
                    <Combo w="174px" label="Значение" value="Нормално" />
                    <PushButton type="button" $w={114}>Деактивирай</PushButton>
                  </Stack>
                </GroupRow>
              </Group>
              <Group $pad="28px 23px 6px 11px">
                <legend>Бележка:</legend>
                <NoteInput aria-label="Бележка" type="text" />
              </Group>
              <FootCell $side="flex-end">
                <Marked $out="-5px -6px -6px -8px">
                  <PushButton type="button" $w={73} $h={22}>OK</PushButton>
                </Marked>
              </FootCell>
              <FootCell $side="flex-start">
                <PushButton type="button" $w={73} $h={22}>Откажи</PushButton>
              </FootCell>
            </BottomGrid>
          </Form>
        </Advanced>

        <Arrow width="100" height="120" fill="none" stroke={red} strokeWidth="3" strokeLinecap="round">
          <path d="M83 4C85 30 91 60 78 78C66 95 36 96 13 102M25 91 13 102l14 5" />
        </Arrow>
        <Step $x={694} $y={104} $sans $bold $italic>1.</Step>
        <Step $x={208} $y={650} $italic>2.</Step>
        <Step $x={1130} $y={259} $sans>3.</Step>
        <Step $x={787} $y={410} $italic>4.</Step>
        <Step $x={657} $y={562}>5.</Step>
        <Step $x={1023} $y={565} $sans $italic>6.</Step>
        <Step $x={689} $y={901} $sans $italic>7.</Step>
      </Desktop>
    </>
  );
}
